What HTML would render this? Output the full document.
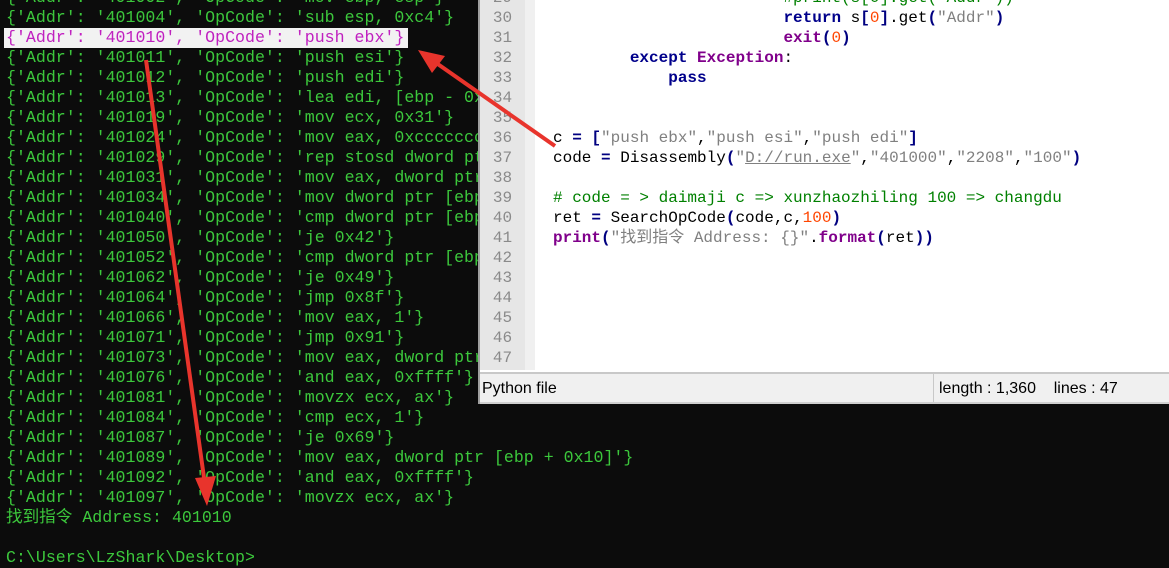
<!DOCTYPE html>
<html><head><meta charset="utf-8"><style>
*{margin:0;padding:0;box-sizing:border-box}
body{width:1169px;height:556px;background:#0c0c0c;overflow:hidden;position:relative;font-family:"Liberation Mono","Noto Sans CJK SC",monospace}
#con{position:absolute;left:6px;top:-12px;color:#3cc83c;font-size:16.6px;line-height:20px;white-space:pre}
#con div{height:20px}
.hl{background:#f2f2f2;color:#c020c0;margin-left:-2px;padding-left:2px;display:inline-block;width:404px}
#ed{position:absolute;left:478px;top:0;width:691px;height:404px;background:#fff;border-left:2px solid #a0a0a0}
#gut{position:absolute;left:0;top:0;width:45px;height:370px;background:#e6e6e6;color:#8a8a8a;font-size:16px;line-height:20px;text-align:center;padding-top:0}
#fold{position:absolute;left:45px;top:0;width:10px;height:370px;background:#f0f0f0}
#code{position:absolute;left:73px;top:-12px;font-size:16px;line-height:20px;white-space:pre;color:#000}
#code div{height:20px}
.k{color:#00008b;font-weight:bold}.p{color:#80008b;font-weight:bold}.s{color:#808080}.c{color:#008000}.n{color:#ff4500}.o{color:#000080;font-weight:bold}
#st{position:absolute;left:0;top:372px;width:691px;height:32px;background:#f0f0f0;border-top:2px solid #c8c8c8;font-family:"Liberation Sans",sans-serif;font-size:16px;color:#000;border-bottom:2px solid #d0d0d0}
</style></head><body>
<div id="con"><div>{'Addr': '401002', 'OpCode': 'mov ebp, esp'}</div><div>{'Addr': '401004', 'OpCode': 'sub esp, 0xc4'}</div><div><span class="hl">{'Addr': '401010', 'OpCode': 'push ebx'}</span></div><div>{'Addr': '401011', 'OpCode': 'push esi'}</div><div>{'Addr': '401012', 'OpCode': 'push edi'}</div><div>{'Addr': '401013', 'OpCode': 'lea edi, [ebp - 0xc4]'}</div><div>{'Addr': '401019', 'OpCode': 'mov ecx, 0x31'}</div><div>{'Addr': '401024', 'OpCode': 'mov eax, 0xcccccccc'}</div><div>{'Addr': '401029', 'OpCode': 'rep stosd dword ptr'}</div><div>{'Addr': '401031', 'OpCode': 'mov eax, dword ptr'}</div><div>{'Addr': '401034', 'OpCode': 'mov dword ptr [ebp'}</div><div>{'Addr': '401040', 'OpCode': 'cmp dword ptr [ebp'}</div><div>{'Addr': '401050', 'OpCode': 'je 0x42'}</div><div>{'Addr': '401052', 'OpCode': 'cmp dword ptr [ebp'}</div><div>{'Addr': '401062', 'OpCode': 'je 0x49'}</div><div>{'Addr': '401064', 'OpCode': 'jmp 0x8f'}</div><div>{'Addr': '401066', 'OpCode': 'mov eax, 1'}</div><div>{'Addr': '401071', 'OpCode': 'jmp 0x91'}</div><div>{'Addr': '401073', 'OpCode': 'mov eax, dword ptr'}</div><div>{'Addr': '401076', 'OpCode': 'and eax, 0xffff'}</div><div>{'Addr': '401081', 'OpCode': 'movzx ecx, ax'}</div><div>{'Addr': '401084', 'OpCode': 'cmp ecx, 1'}</div><div>{'Addr': '401087', 'OpCode': 'je 0x69'}</div><div>{'Addr': '401089', 'OpCode': 'mov eax, dword ptr [ebp + 0x10]'}</div><div>{'Addr': '401092', 'OpCode': 'and eax, 0xffff'}</div><div>{'Addr': '401097', 'OpCode': 'movzx ecx, ax'}</div><div>找到指令 Address: 401010</div><div> </div><div>C:\Users\LzShark\Desktop&gt;</div></div>
<div id="ed">
<div id="gut"><div style="margin-top:-12px">29</div><div>30</div><div>31</div><div>32</div><div>33</div><div>34</div><div>35</div><div>36</div><div>37</div><div>38</div><div>39</div><div>40</div><div>41</div><div>42</div><div>43</div><div>44</div><div>45</div><div>46</div><div>47</div></div>
<div id="fold"></div>
<div id="code"><div class="c">                        #print(s[0].get("Addr"))</div><div>                        <span class="k">return</span> s<span class="o">[</span><span class="n">0</span><span class="o">]</span>.get<span class="o">(</span><span class="s">"Addr"</span><span class="o">)</span></div><div>                        <span class="p">exit</span><span class="o">(</span><span class="n">0</span><span class="o">)</span></div><div>        <span class="k">except</span> <span class="p">Exception</span>:</div><div>            <span class="k">pass</span></div><div> </div><div> </div><div>c <span class="o">=</span> <span class="o">[</span><span class="s">"push ebx"</span>,<span class="s">"push esi"</span>,<span class="s">"push edi"</span><span class="o">]</span></div><div>code <span class="o">=</span> Disassembly<span class="o">(</span><span class="s">"<u>D://run.exe</u>"</span>,<span class="s">"401000"</span>,<span class="s">"2208"</span>,<span class="s">"100"</span><span class="o">)</span></div><div> </div><div class="c"># code = &gt; daimaji c =&gt; xunzhaozhiling 100 =&gt; changdu</div><div>ret <span class="o">=</span> SearchOpCode<span class="o">(</span>code,c,<span class="n">100</span><span class="o">)</span></div><div><span class="p">print</span><span class="o">(</span><span class="s">"找到指令 Address: {}"</span>.<span class="p">format</span><span class="o">(</span>ret<span class="o">))</span></div></div>
<div id="st"><span style="position:absolute;left:2px;top:6px">Python file</span><span style="position:absolute;left:453px;top:0;width:1px;height:28px;background:#c8c8c8"></span><span style="position:absolute;left:459px;top:6px">length : 1,360&nbsp;&nbsp;&nbsp; lines : 47</span></div>
</div>
<svg style="position:absolute;left:0;top:0" width="1169" height="556">
<line x1="555" y1="146" x2="432" y2="60" stroke="#e8342c" stroke-width="4"/>
<polygon points="418,50 445,56 432,73" fill="#e8342c"/>
<line x1="146" y1="60" x2="205" y2="485" stroke="#e8342c" stroke-width="4"/>
<polygon points="207,506 195,478 216,476" fill="#e8342c"/>
</svg>
</body></html>
